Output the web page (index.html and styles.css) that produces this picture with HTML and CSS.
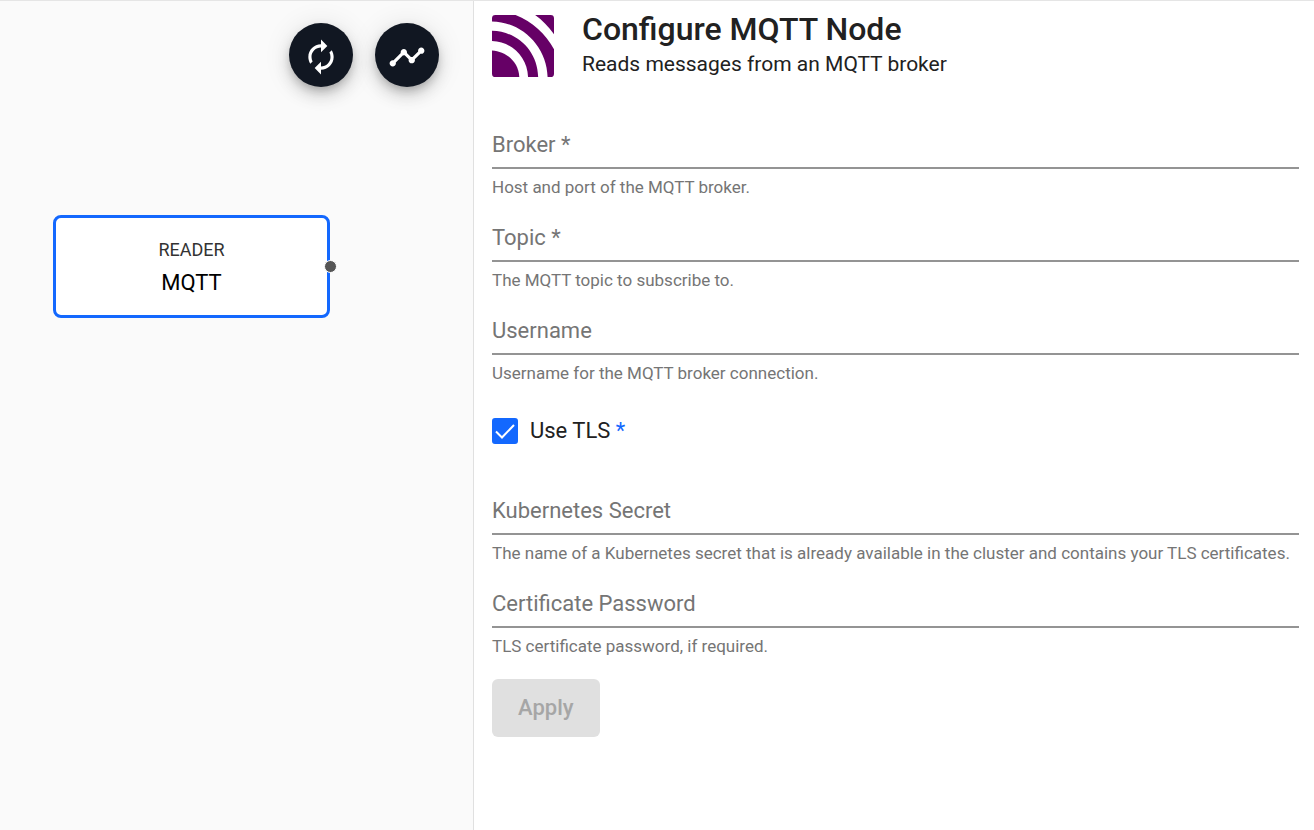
FILE: index.html
```html
<!DOCTYPE html>
<html lang="en">
<head>
<meta charset="utf-8">
<meta name="viewport" content="width=device-width, initial-scale=1">
<title>Configure MQTT Node</title>
<link rel="stylesheet" href="styles.css">
</head>
<body>
<div class="editor">
  <section class="canvas" aria-label="Flow graph">
    <div class="toolbar">
      <button class="fab" type="button" aria-label="Refresh">
        <svg class="fab-icon" viewBox="0 0 24 24" fill="currentColor" aria-hidden="true"><path d="M12 6v3l4-4-4-4v3c-4.420 0-8 3.580-8 8 0 1.570.46 3.030 1.240 4.260L6.700 14.800C6.250 13.970 6 13.010 6 12c0-3.310 2.690-6 6-6zm6.760 1.740L17.300 9.200c.44.84.7 1.790.7 2.800 0 3.310-2.690 6-6 6v-3l-4 4 4 4v-3c4.420 0 8-3.580 8-8 0-1.570-.46-3.030-1.240-4.260z"/></svg>
      </button>
      <button class="fab" type="button" aria-label="Metrics">
        <svg class="fab-icon" viewBox="0 0 24 24" fill="currentColor" aria-hidden="true"><path d="M23 8c0 1.100-.9 2-2 2-.18 0-.35-.02-.51-.07l-3.560 3.550c.05.16.07.34.07.52 0 1.100-.9 2-2 2s-2-.9-2-2c0-.18.02-.36.07-.52l-2.550-2.550c-.16.05-.34.07-.52.07s-.36-.02-.52-.07l-4.550 4.560c.05.16.07.33.07.51 0 1.100-.9 2-2 2s-2-.9-2-2 .9-2 2-2c.18 0 .35.02.51.07l4.560-4.550C8.020 9.360 8 9.180 8 9c0-1.100.9-2 2-2s2 .9 2 2c0 .18-.02.36-.07.52l2.550 2.550c.16-.05.34-.07.52-.07s.36.02.52.07l3.550-3.560C19.020 8.350 19 8.180 19 8c0-1.100.9-2 2-2s2 .9 2 2z"/></svg>
      </button>
    </div>
    <div class="node">
      <span class="node-kind">READER</span>
      <span class="node-name">MQTT</span>
      <span class="node-port"></span>
    </div>
  </section>

  <main class="panel">
    <header class="panel-header">
      <svg class="logo" viewBox="0 0 184 184" fill="#660066" aria-hidden="true">
        <path d="M0 105C46 108 79 142 81 184H10Q0 184 0 174Z"/>
        <path d="M0 47C78 49 135 108 137 184H107C105 125 59 79 0 77Z"/>
        <path d="M10 0H70C120 20 160 56 184 102V174Q184 184 174 184H165C163 94 90 21 0 19V10Q0 0 10 0Z"/>
        <path d="M128 0H174Q184 0 184 10V57C168 35 149 15 128 0Z"/>
      </svg>
      <div class="panel-heading">
        <h1 class="title">Configure MQTT Node</h1>
        <p class="subtitle">Reads messages from an MQTT broker</p>
      </div>
    </header>

    <form class="form">
      <div class="field">
        <input class="field-input" id="broker" type="text" aria-describedby="broker-hint">
        <label class="field-label" for="broker">Broker *</label>
        <p class="field-hint" id="broker-hint">Host and port of the MQTT broker.</p>
      </div>
      <div class="field">
        <input class="field-input" id="topic" type="text" aria-describedby="topic-hint">
        <label class="field-label" for="topic">Topic *</label>
        <p class="field-hint" id="topic-hint">The MQTT topic to subscribe to.</p>
      </div>
      <div class="field">
        <input class="field-input" id="username" type="text" aria-describedby="username-hint">
        <label class="field-label" for="username">Username</label>
        <p class="field-hint" id="username-hint">Username for the MQTT broker connection.</p>
      </div>
      <div class="check">
        <span class="check-box">
          <input class="check-input" id="tls" type="checkbox" checked>
          <svg class="check-mark" viewBox="0 0 26 26" fill="none" stroke="#fff" stroke-width="2" aria-hidden="true"><path d="M4 13.500L10 19.500L22 7"/></svg>
        </span>
        <label class="check-label" for="tls">Use TLS <span class="required">*</span></label>
      </div>
      <div class="field">
        <input class="field-input" id="secret" type="text" aria-describedby="secret-hint">
        <label class="field-label" for="secret">Kubernetes Secret</label>
        <p class="field-hint" id="secret-hint">The name of a Kubernetes secret that is already available in the cluster and contains your TLS certificates.</p>
      </div>
      <div class="field">
        <input class="field-input" id="password" type="password" aria-describedby="password-hint">
        <label class="field-label" for="password">Certificate Password</label>
        <p class="field-hint" id="password-hint">TLS certificate password, if required.</p>
      </div>
      <button class="apply" type="submit" disabled>Apply</button>
    </form>
  </main>
</div>
</body>
</html>
```
FILE: styles.css
```css
* {
  box-sizing: border-box;
}

body {
  margin: 0;
  font-family: Roboto, "Liberation Sans", sans-serif;
  color: #212121;
  background: #fff;
}

.editor {
  display: grid;
  grid-template-columns: 79fr 140fr;
  min-height: 100vh;
  border-top: 1px solid #e5e5e5;
}

.canvas {
  position: relative;
  background: #fafafa;
  border-right: 1px solid #e0e0e0;
}

.toolbar {
  display: flex;
  justify-content: flex-end;
  gap: 22px;
  padding: 22px 34px;
}

.fab {
  display: flex;
  align-items: center;
  justify-content: center;
  width: 64px;
  height: 64px;
  padding: 3px 0 0;
  border: 0;
  border-radius: 50%;
  color: #fff;
  background: #111722;
  box-shadow: 0 5px 8px -2px rgba(0, 0, 0, 0.2), 0 9px 16px rgba(0, 0, 0, 0.14), 0 2px 28px rgba(0, 0, 0, 0.1);
}

.fab-icon {
  width: 38px;
  height: 38px;
}

.node {
  position: absolute;
  left: 53px;
  top: 214px;
  display: flex;
  flex-direction: column;
  align-items: center;
  justify-content: center;
  gap: 8px;
  width: 277px;
  height: 103px;
  border: 3px solid #1368fe;
  border-radius: 8px;
  background: #fff;
}

.node-kind {
  font-size: 18px;
  line-height: 24px;
  color: #333;
}

.node-name {
  font-size: 22px;
  line-height: 26px;
  color: #000;
}

.node-port {
  position: absolute;
  right: -10px;
  top: 42px;
  width: 13px;
  height: 13px;
  border: 1px solid #fff;
  border-radius: 50%;
  background: #555;
}

.panel {
  padding: 8px 15px 24px 18px;
}

.panel-header {
  display: flex;
  align-items: center;
  gap: 28px;
}

.logo {
  flex: none;
  width: 62px;
  height: 62px;
  margin-top: 4px;
}

.title {
  margin: 0;
  font-size: 32px;
  line-height: 40px;
  font-weight: 500;
}

.subtitle {
  margin: 0;
  font-size: 21px;
  line-height: 30px;
}

.form {
  padding-top: 42px;
}

.field {
  display: grid;
  grid-template-rows: 48px auto;
  padding-bottom: 16px;
}

.field-input {
  grid-area: 1 / 1;
  width: 100%;
  padding: 0;
  border: 0;
  border-bottom: 2px solid #949494;
  outline: 0;
  font: inherit;
  font-size: 22px;
  color: inherit;
  background: transparent;
}

.field-label {
  grid-area: 1 / 1;
  align-self: center;
  font-size: 22px;
  line-height: 26px;
  color: #757575;
}

.field-hint {
  margin: 7px 0 0;
  font-size: 17px;
  line-height: 22px;
  color: #757575;
}

.check {
  display: flex;
  align-items: center;
  gap: 12px;
  padding: 17px 0 42px;
}

.check-box {
  display: grid;
  width: 26px;
  height: 26px;
}

.check-input {
  grid-area: 1 / 1;
  appearance: none;
  width: 100%;
  height: 100%;
  margin: 0;
  border: 2px solid #757575;
  border-radius: 3px;
}

.check-input:checked {
  border-color: #1368fe;
  background: #1368fe;
}

.check-mark {
  grid-area: 1 / 1;
  pointer-events: none;
}

.check-label {
  font-size: 22px;
  line-height: 28px;
}

.required {
  color: #1368fe;
}

.apply {
  margin-top: 6px;
  padding: 15px 26px;
  border: 0;
  border-radius: 6px;
  font: inherit;
  font-size: 22px;
  line-height: 28px;
  font-weight: 500;
  color: #a6a6a6;
  background: #e0e0e0;
}
```
